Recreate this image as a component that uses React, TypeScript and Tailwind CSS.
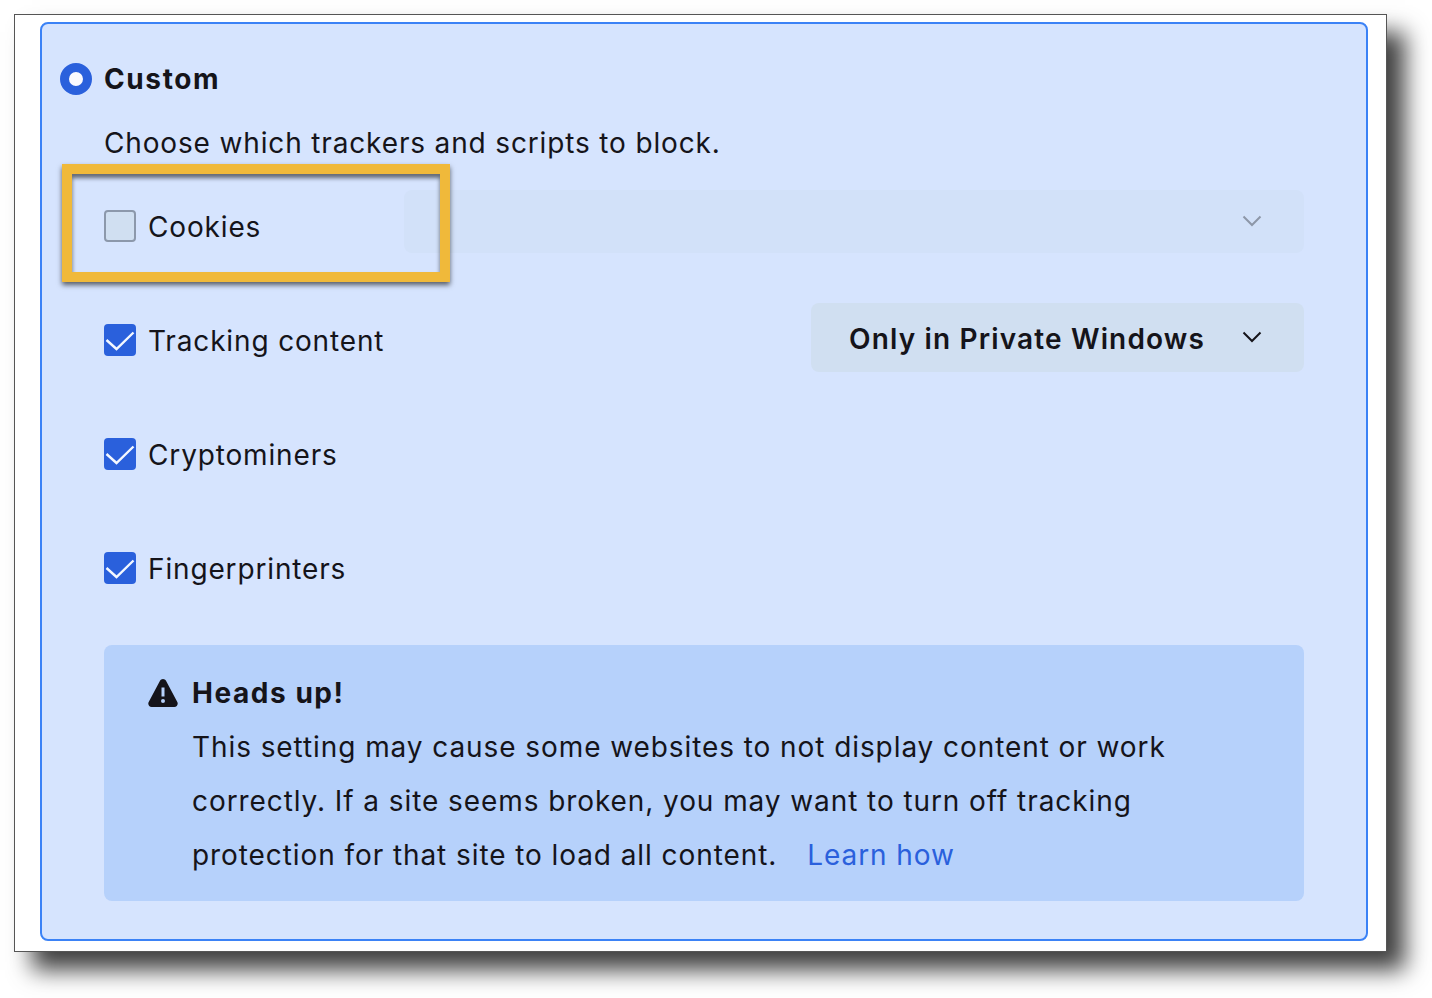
const Chevron = ({ className }: { className: string }) => (
  <svg viewBox="0 0 20 12" className={className} fill="none" stroke="currentColor" strokeWidth="2">
    <path d="M1.5 1.5 L10 10 L18.5 1.5" />
  </svg>
);

function Check({ label, checked = true }: { label: string; checked?: boolean }) {
  return (
    <div className="flex items-center gap-3">
      {checked ? (
        <div className="w-8 h-8 rounded-[4px] bg-[#2a60dc] flex items-center justify-center">
          <svg viewBox="0 0 32 32" className="w-8 h-8" fill="none" stroke="#f4f8ff" strokeWidth="2.4">
            <path d="M2.5 16 L12.5 25 L29.5 8.500" />
          </svg>
        </div>
      ) : (
        <div className="w-8 h-8 rounded-[4px] bg-[#d0dff1] border-2 border-[#8c98ab]" />
      )}
      <span className="pt-[2px]">{label}</span>
    </div>
  );
}

export default function App() {
  return (
    <div className="min-h-screen bg-white pt-[14px] pl-[14px] font-['Inter',sans-serif] text-[#15141a] text-[28px] tracking-[0.85px]">
      <div className="relative w-[1373px] h-[938px] bg-white border border-[#555] pt-[7px] pl-[25px] shadow-[18px_18px_22px_rgba(0,0,0,0.75)]">
        <div className="w-[1328px] h-[919px] bg-[#d6e4fe] border-2 border-[#3b82f6] rounded-[8px] pt-[39px] pl-[18px]">
          <div className="flex items-center gap-3 h-8">
            <div className="w-8 h-8 rounded-full border-[9px] border-[#2a60dc] bg-[#f9f9fe]" />
            <span className="font-bold tracking-[1.6px]">Custom</span>
          </div>

          <div className="pl-[44px] w-[1244px]">
            <p className="mt-[30px] h-9 leading-9">Choose which trackers and scripts to block.</p>

            <div className="mt-2 h-[114px] flex items-center justify-between">
              <Check label="Cookies" checked={false} />
              <div className="w-[900px] h-[63px] mb-[10px] bg-[#d2e1f9] rounded-[8px] flex items-center justify-end pr-[42px] text-[#8d97a8]">
                <Chevron className="w-5 h-3" />
              </div>
            </div>

            <div className="h-[114px] flex items-center justify-between">
              <Check label="Tracking content" />
              <div className="w-[493px] h-[69px] mb-[6px] bg-[#d0dff1] rounded-[8px] flex items-center justify-between pl-[38px] pr-[42px] font-semibold tracking-[1.15px]">
                <span className="pt-[4px]">Only in Private Windows</span>
                <Chevron className="w-5 h-3" />
              </div>
            </div>

            <div className="h-[114px] flex items-center">
              <Check label="Cryptominers" />
            </div>
            <div className="h-[114px] flex items-center">
              <Check label="Fingerprinters" />
            </div>

            <div className="mt-5 h-[256px] bg-[#b6d1fb] rounded-[8px] pt-[21px] pl-[44px] leading-[54px]">
              <div className="flex items-center gap-[14px] h-[54px]">
                <svg viewBox="0 0 30 28" className="w-[30px] h-[28px]" fill="#15141a">
                  <path fillRule="evenodd" d="M15 0c1.300 0 2.400.7 3 1.800l11.300 21.100c1.200 2.300-.3 5.100-3 5.100H3.700c-2.700 0-4.200-2.800-3-5.100L12 1.800C12.600.7 13.700 0 15 0zm-1.500 8.500v9h3v-9zm1.500 11.500a2 2 0 1 0 0 4 2 2 0 0 0 0-4z" />
                </svg>
                <span className="font-bold tracking-[1.55px]">Heads up!</span>
              </div>
              <p className="pl-[44px] w-[1044px] tracking-[0.92px]">
                This setting may cause some websites to not display content or work correctly. If a site seems broken, you may want to turn off tracking protection for that site to load all content.
                <a className="ml-[30px] text-[#2a60dc]">Learn how</a>
              </p>
            </div>
          </div>
        </div>

        {/* annotation drawn on top of the screenshot */}
        <div className="absolute left-[47px] top-[149px] w-[388px] h-[118px] border-[10px] border-[#f0b93a] shadow-[0_3px_5px_rgba(0,0,0,0.6),inset_0_4px_4px_rgba(0,0,0,0.55)] pointer-events-none" />
      </div>
    </div>
  );
}
